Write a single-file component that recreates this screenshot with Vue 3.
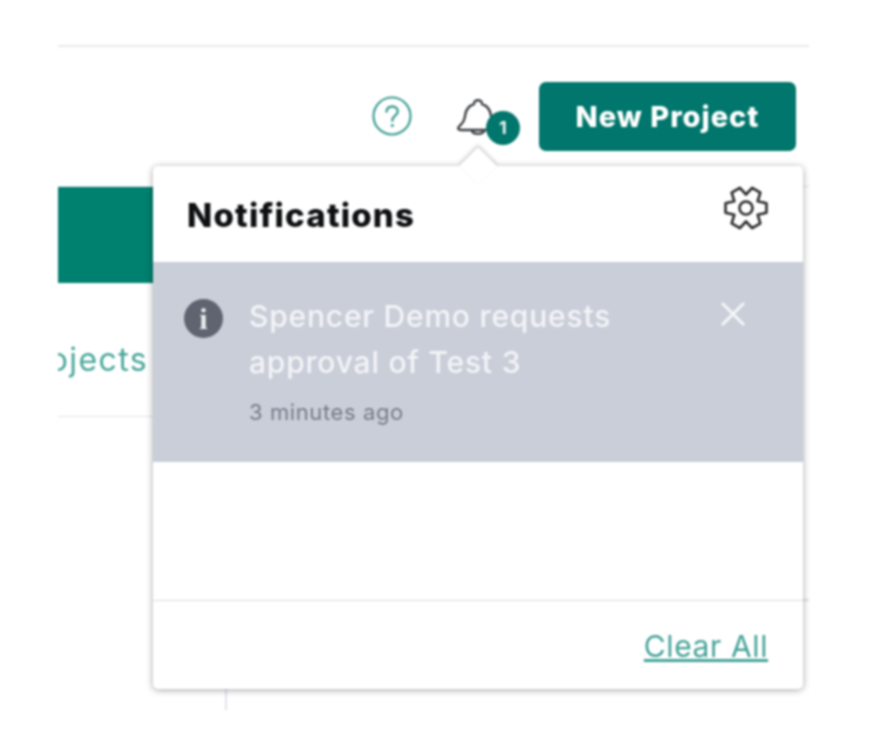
<template>
  <div class="page">
    <div class="workspace">
      <header class="toolbar">
        <button class="help-btn" type="button" aria-label="Help">
          <svg viewBox="0 0 40 40" width="40" height="40">
            <circle cx="20" cy="20" r="18.500" fill="none" stroke="#3d9e93" stroke-width="2.200" />
            <path d="M14.500 15.500c.4-3.200 2.800-5 5.700-5 3.300 0 5.600 2 5.600 4.800 0 4.400-5.500 4.400-5.500 9.200" fill="none" stroke="#3d9e93" stroke-width="2.400" stroke-linecap="round" />
            <circle cx="20.300" cy="29.500" r="1.600" fill="#3d9e93" />
          </svg>
        </button>
        <div class="bell-wrap">
          <svg class="bell" viewBox="0 0 44 40" width="44" height="40">
            <path d="M18 6c-.5-5 8.500-5 8 0 6 2 8.500 6.500 9 12 .5 5 2.500 7.500 5.500 10 2.500 2.500 1 4-1.500 4H5c-2.500 0-4-1.500-1.500-4 3-2.500 5-5 5.500-10 .5-5.500 3-10 9-12z" fill="#fff" stroke="#3c3f44" stroke-width="2.400" stroke-linejoin="round" />
            <path d="M16 32.500c.8 4.500 11 4.500 12 0" fill="none" stroke="#3c3f44" stroke-width="2.400" />
          </svg>
          <span class="badge">1</span>
        </div>
        <button class="new-project" type="button">New Project</button>
      </header>

      <section class="board">
        <div class="tabs-col">
          <div class="teal-block"></div>
          <div class="tab-label"><span>Projects</span></div>
        </div>
        <div class="board-body"></div>
      </section>
    </div>

    <aside class="notif-panel">
      <span class="arrow"></span>
      <div class="notif-head">
        <h2>Notifications</h2>
        <svg class="gear" viewBox="0 0 46 44" width="46" height="44">
          <path :d="gearPath" fill="none" stroke="#2a2b2e" stroke-width="2.600" stroke-linejoin="round" />
          <circle cx="23" cy="22" r="6.500" fill="none" stroke="#2a2b2e" stroke-width="2.600" />
        </svg>
      </div>
      <div class="notif-item">
        <span class="info-icon">i</span>
        <div class="notif-copy">
          <p class="notif-text">Spencer Demo requests approval of Test 3</p>
          <p class="notif-time">3 minutes ago</p>
        </div>
        <svg class="close" viewBox="0 0 26 26" width="26" height="26">
          <path d="M2 2l22 22M24 2L2 24" stroke="#f5f6f8" stroke-width="3" fill="none" />
        </svg>
      </div>
      <div class="notif-empty"></div>
      <footer class="notif-foot">
        <a class="clear-all" href="#">Clear All</a>
      </footer>
    </aside>
  </div>
</template>

<script setup>
// gear outline with six teeth, flat sides up and down
const buildGear = () => {
  const cx = 23
  const cy = 22
  const outer = 21
  const inner = 13.5
  const toRad = Math.PI / 180
  const pts = []
  for (let i = 0; i < 6; i++) {
    const a = i * 60 * toRad
    pts.push([a - 30 * toRad, inner], [a - 13 * toRad, outer], [a + 13 * toRad, outer])
  }
  const coords = pts.map(([a, r]) => `${(cx + r * Math.cos(a)).toFixed(2)} ${(cy + r * Math.sin(a)).toFixed(2)}`)
  return `M${coords.join('L')}Z`
}

const gearPath = buildGear()
</script>

<style>
html,
body {
  margin: 0;
  background: #fff;
}
</style>

<style scoped>
.page {
  position: relative;
  width: 888px;
  height: 736px;
  overflow: hidden;
  background: #fff;
  font-family: Inter, "Noto Sans", sans-serif;
  filter: blur(0.9px);
}

.workspace {
  width: 751px;
  margin-left: 58px;
  padding-top: 45px;
  box-sizing: border-box;
}

.toolbar {
  display: flex;
  align-items: center;
  justify-content: flex-end;
  height: 141px;
  box-sizing: border-box;
  padding: 35px 13px 36px 0;
  border-top: 2px solid #e8e9ec;
}

.help-btn {
  display: flex;
  padding: 0;
  border: 0;
  background: none;
  margin-right: 44px;
}

.bell-wrap {
  position: relative;
  width: 44px;
  height: 40px;
  margin-right: 39px;
  margin-top: 4px;
}

.badge {
  position: absolute;
  left: 30px;
  top: 13px;
  width: 34px;
  height: 34px;
  border-radius: 50%;
  background: #00766c;
  color: #e8f3f1;
  font-size: 18px;
  font-weight: 700;
  line-height: 34px;
  text-align: center;
}

.new-project {
  width: 257px;
  height: 69px;
  border: 0;
  border-radius: 7px;
  background: #00766c;
  color: #fff;
  font-family: inherit;
  font-size: 29px;
  font-weight: 800;
  letter-spacing: 1px;
}

.board {
  display: flex;
  height: 550px;
  border-top: 1px solid #dfe1ec;
}

.tabs-col {
  width: 167px;
  height: 523px;
  border-right: 2px solid #e1e3ed;
}

.teal-block {
  width: 110px;
  height: 96px;
  background: #00806f;
}

.tab-label {
  display: flex;
  justify-content: flex-end;
  width: 110px;
  height: 133px;
  overflow: hidden;
  box-shadow: 0 1px 0 #e1e3ed;
  padding: 56px 20px 0 0;
  box-sizing: border-box;
  color: #4aa79b;
  font-size: 32px;
  letter-spacing: 1.4px;
  line-height: 42px;
  white-space: nowrap;
}

.board-body {
  flex: 1;
  height: 412px;
  border-bottom: 2px solid #dfe1ec;
}

.notif-panel {
  position: absolute;
  left: 153px;
  top: 166px;
  width: 650px;
  height: 523px;
  display: flex;
  flex-direction: column;
  background: #fff;
  border-radius: 5px;
  box-shadow: 0 1px 7px rgba(0, 0, 0, 0.36);
}

.arrow {
  position: absolute;
  left: 311px;
  top: -14px;
  width: 28px;
  height: 28px;
  background: #fff;
  transform: rotate(45deg) scale(0.95);
  box-shadow: -2px -2px 4px rgba(0, 0, 0, 0.18);
}

.notif-head {
  position: relative;
  height: 96px;
  flex-shrink: 0;
  display: flex;
  justify-content: space-between;
  align-items: flex-start;
  padding: 0 34px;
}

.notif-head h2 {
  margin: 27px 0 0;
  color: #0f1012;
  font-size: 33px;
  font-weight: 800;
  letter-spacing: 1.2px;
  line-height: 44px;
}

.gear {
  margin-top: 20px;
}

.notif-item {
  height: 200px;
  flex-shrink: 0;
  display: flex;
  align-items: flex-start;
  background: #c9ced9;
  padding-left: 31px;
  box-sizing: border-box;
}

.info-icon {
  width: 39px;
  height: 39px;
  margin-top: 37px;
  border-radius: 50%;
  background: #5f6470;
  color: #eceef1;
  font-family: "Liberation Serif", serif;
  font-size: 30px;
  font-weight: 700;
  line-height: 39px;
  text-align: center;
  flex-shrink: 0;
}

.notif-copy {
  width: 415px;
  margin-left: 26px;
  padding-top: 31px;
}

.notif-text {
  margin: 0;
  color: #f3f4f7;
  font-size: 30px;
  font-weight: 500;
  letter-spacing: 0.8px;
  line-height: 46px;
}

.notif-time {
  margin: 13px 0 0;
  color: #767b88;
  font-size: 22px;
  letter-spacing: 0.6px;
  line-height: 28px;
}

.close {
  margin: 39px 0 0 56px;
}

.notif-empty {
  flex: 1;
}

.notif-foot {
  height: 89px;
  flex-shrink: 0;
  display: flex;
  justify-content: flex-end;
  align-items: flex-start;
  padding: 27px 35px 0 0;
  box-sizing: border-box;
  border-top: 1px solid #d8dbe8;
}

.clear-all {
  color: #46a397;
  font-size: 30px;
  letter-spacing: 0.6px;
  line-height: 36px;
  text-decoration: underline;
}
</style>
